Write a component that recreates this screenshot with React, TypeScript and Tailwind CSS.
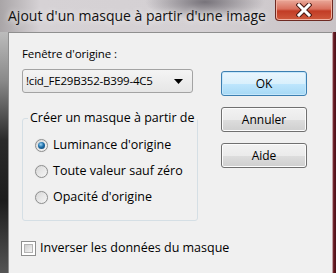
import { useState } from "react";

const font = { fontFamily: '"Open Sans", "Noto Sans", sans-serif' };

const Radio = ({ checked }: { checked: boolean }) => (
  <span className="relative flex h-[13px] w-[13px] shrink-0 items-center justify-center rounded-full border border-[#8e8f8f] bg-[linear-gradient(135deg,#d8d8d8,#f6f6f6)] shadow-[0_0_1px_#c8c8c8]">
    {checked && (
      <span className="h-[7px] w-[7px] rounded-full bg-[radial-gradient(circle_at_40%_35%,#9fd6f6,#1d6ea8_45%,#0c3a66)]" />
    )}
  </span>
);

const Button = ({ label, primary }: { label: string; primary?: boolean }) => (
  <button
    className={`flex h-[25px] w-[86px] items-center justify-center rounded-[3px] border text-[12px] text-black ${
      primary
        ? "border-[#3c7fb1] bg-[linear-gradient(#eaf6fd_0%,#d9f0fc_50%,#bee6fd_51%,#a7d9f5_100%)] shadow-[inset_0_0_0_1px_#c5e7fb]"
        : "border-[#707070] bg-[linear-gradient(#f2f2f2_0%,#ebebeb_50%,#dddddd_51%,#cfcfcf_100%)] shadow-[inset_0_0_0_1px_#fcfcfc]"
    }`}
  >
    {label}
  </button>
);

export default function App() {
  const [mode, setMode] = useState(0);
  const options = ["Luminance d'origine", "Toute valeur sauf zéro", "Opacité d'origine"];

  return (
    <div className="flex h-[273px] w-[336px] flex-col overflow-hidden bg-[#c4c0c2]" style={font}>
      {/* Title bar */}
      <div className="relative flex h-[32px] shrink-0 bg-[radial-gradient(ellipse_60px_18px_at_205px_2px,#77737a,transparent),linear-gradient(90deg,#a9a5a7,#d6d2d5_12%,#d4d0d3_60%,#c9c3c6)]">
        <span className="pl-[8px] pt-[6px] text-[14px] leading-[20px] text-[#111] [text-shadow:0_0_6px_#ffffff]">
          Ajout d'un masque à partir d'une image
        </span>
        <div className="absolute right-[3px] top-0 flex h-[21px] w-[58px] items-center justify-center rounded-b-[4px] border border-t-0 border-[#6e2a22] bg-[linear-gradient(#e9a899_0%,#d9705d_45%,#c23c25_55%,#cf5a3d_100%)] shadow-[inset_0_0_0_1px_#f0b0a0]">
          <svg width="16" height="14" viewBox="0 0 16 14">
            <path d="M3 2 L13 12 M13 2 L3 12" stroke="#4a1a14" strokeWidth="5" strokeLinecap="square" />
            <path d="M3 2 L13 12 M13 2 L3 12" stroke="#ffffff" strokeWidth="3" strokeLinecap="square" />
          </svg>
        </div>
      </div>

      <div className="flex flex-1">
        {/* Left frame */}
        <div className="w-[8px] shrink-0 bg-[linear-gradient(#bcbcbc_0%,#8a8a8a_20%,#2a2a2a_45%,#1c1c1c_70%,#555555_100%)]" />

        {/* Client area */}
        <div className="flex flex-1 border-l border-t border-[#8f8f8f] bg-[#f0f0f0] text-[12.5px] leading-[16px] text-black">
          <div className="ml-[13px] flex w-[171px] shrink-0 flex-col pt-[13px]">
            <span className="text-[11.5px] tracking-[-0.1px]">Fenêtre d'origine :</span>
            <div className="mt-[7px] flex h-[24px] items-center justify-between rounded-[3px] border border-[#a3a3a3] bg-[linear-gradient(#f4f4f4,#e6e6e6)] pl-[3px] pr-[9px] text-[11.5px] tracking-[-0.2px]">
              <span>!cid_FE29B352-B399-4C5</span>
              <svg width="9" height="5" viewBox="0 0 9 5">
                <path d="M0 0 H9 L4.5 5 Z" fill="#000" />
              </svg>
            </div>

            <fieldset className="mt-[17px] rounded-[3px] border border-[#d5dfe5] pb-[10px] pt-[6px]">
              <legend className="ml-[5px] whitespace-nowrap px-[2px]">Créer un masque à partir de</legend>
              <div className="flex flex-col pl-[12px]">
                {options.map((o, i) => (
                  <label key={o} className="flex h-[26px] items-center gap-[5px] whitespace-nowrap" onClick={() => setMode(i)}>
                    <Radio checked={mode === i} />
                    <span>{o}</span>
                  </label>
                ))}
              </div>
            </fieldset>

            <label className="mt-[19px] -ml-[1px] flex h-[16px] items-center gap-[4px] whitespace-nowrap">
              <span className="h-[15px] w-[15px] shrink-0 border border-[#8e8f8f] bg-white p-[2px]">
                <span className="block h-full w-full border border-[#b4b4b4] bg-[linear-gradient(135deg,#cfcfcf,#f4f4f4)]" />
              </span>
              <span>Inverser les données du masque</span>
            </label>
          </div>

          <div className="ml-[28px] flex flex-col gap-[11px] pt-[38px]">
            <Button label="OK" primary />
            <Button label="Annuler" />
            <Button label="Aide" />
          </div>
        </div>

        {/* Right frame */}
        <div className="w-[4px] shrink-0 bg-[linear-gradient(90deg,#e8e0e0,#6a1c24_40%,#4a1018)]" />
      </div>
    </div>
  );
}
